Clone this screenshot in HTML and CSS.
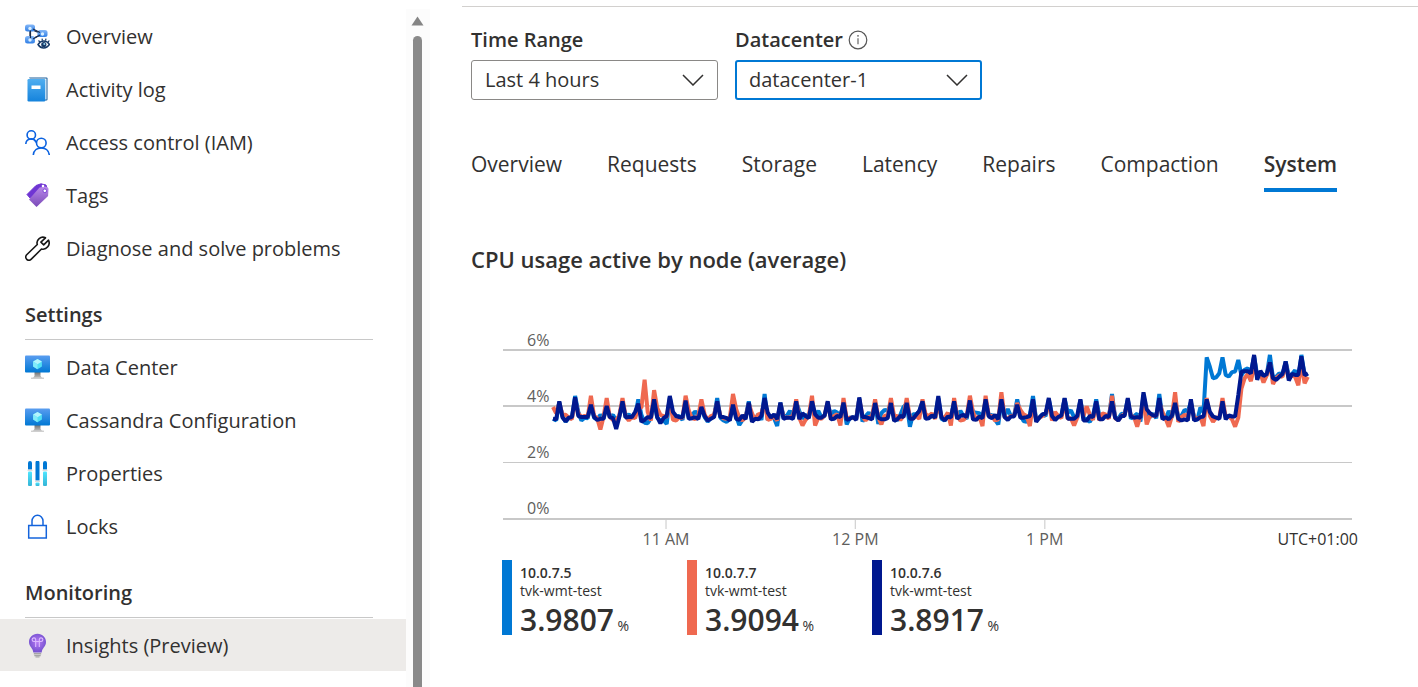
FILE: index.html
```html
<!DOCTYPE html>
<html lang="en">
<head>
<meta charset="utf-8">
<title>Insights (Preview)</title>
<link rel="stylesheet" href="styles.css">
</head>
<body>
<svg class="defs" aria-hidden="true">
  <defs>
    <linearGradient id="g-node" x1="0" y1="0" x2="0" y2="1"><stop offset="0" stop-color="#86b8f7"/><stop offset="1" stop-color="#2f7fe6"/></linearGradient>
    <linearGradient id="g-book" x1="0" y1="0" x2="0" y2="1"><stop offset="0" stop-color="#50aef0"/><stop offset="1" stop-color="#1583dc"/></linearGradient>
    <linearGradient id="g-tag" x1="0" y1="0" x2="0" y2="1"><stop offset="0" stop-color="#b989ea"/><stop offset="1" stop-color="#7a4ab8"/></linearGradient>
    <linearGradient id="g-screen" x1="0" y1="0" x2="0" y2="1"><stop offset="0" stop-color="#5a9df0"/><stop offset="1" stop-color="#0078d4"/></linearGradient>
    <linearGradient id="g-stand" x1="0" y1="0" x2="0" y2="1"><stop offset="0" stop-color="#707070"/><stop offset="1" stop-color="#c8c8c8"/></linearGradient>
    <linearGradient id="g-cyan" x1="0" y1="0" x2="0" y2="1"><stop offset="0" stop-color="#50e6ff"/><stop offset="1" stop-color="#35b4d6"/></linearGradient>
    <radialGradient id="g-bulb" cx=".5" cy=".45" r=".55"><stop offset="0" stop-color="#b77af4"/><stop offset="1" stop-color="#7350cf"/></radialGradient>
    <symbol id="i-monitor" viewBox="0 0 25 25">
      <path d="M9.500 17h6v4l2 2.500h-10l2-2.500z" fill="url(#g-stand)"/>
      <rect x="6" y="22.500" width="13" height="1.500" rx=".5" fill="#cfcfcf"/>
      <rect y="0.500" width="25" height="17" rx="1" fill="url(#g-screen)"/>
      <path d="M12.500 4l4.400 2.600v5L12.500 14.200 8.100 11.600v-5z" fill="#50dff5"/>
      <path d="M12.500 4l4.400 2.600-4.400 2.600-4.400-2.600z" fill="#b4f4fd"/>
      <path d="M8.100 6.600l4.400 2.600v5l-4.400-2.600z" fill="#83ebfa"/>
    </symbol>
  </defs>
</svg>

<div class="page">
  <aside class="sidebar">
    <nav class="menu" aria-label="Resource menu">
      <ul class="menu-list">
        <li><a class="menu-item" href="#overview">
          <svg class="icon" viewBox="0 0 25 25"><path d="M5 5v11l12-6zM5 5l12 5" fill="none" stroke="#1b2d4c" stroke-width="1.300"/><rect x="0" y="0.500" width="10" height="7" rx="2.500" fill="url(#g-node)"/><rect x="0" y="12" width="10" height="7.500" rx="2.500" fill="url(#g-node)"/><rect x="12.500" y="6" width="10" height="7" rx="2.500" fill="url(#g-node)"/><path d="M5.500 6.500v8M8 5l7 3.500M8 15l7-4" fill="none" stroke="#1b2d4c" stroke-width="1.200"/><g fill="#d9efff"><circle cx="5" cy="4.500" r="1.700"/><circle cx="5" cy="16" r="1.700"/><circle cx="17.500" cy="10" r="1.700"/></g><path d="M13 20.500c3-4.700 8.500-4.700 11.500 0-3 4.700-8.500 4.700-11.500 0z" fill="#fff" stroke="#173a68" stroke-width="1.400"/><path d="M13.500 16.500l1.500 1.700M17 14.700l.5 2M21 14.700l-.5 2M24.300 16.500L23 18.200" stroke="#173a68" stroke-width="1.200"/><circle cx="18.800" cy="20.500" r="2.600" fill="#173a68"/><circle cx="19.300" cy="20" r="1" fill="#9bd5ef"/></svg>
          Overview</a></li>
        <li><a class="menu-item" href="#activity">
          <svg class="icon" viewBox="0 0 25 25"><path d="M4 .5h17.500a1 1 0 0 1 1 1v21a1 1 0 0 1-1 1h-2z" fill="#1a5f9c"/><path d="M4 1.500h17.500v21h-2z" fill="#f2f8fc"/><rect x="2.500" y="2" width="17.800" height="22.500" rx="1.200" fill="url(#g-book)"/><rect x="6.500" y="8.500" width="9" height="3.500" fill="#fff"/></svg>
          Activity log</a></li>
        <li><a class="menu-item" href="#iam">
          <svg class="icon" viewBox="0 0 25 25" fill="none" stroke="#0b62e0" stroke-width="1.600"><circle cx="6.300" cy="5" r="4.200"/><path d="M.8 14c.3-6.500 8.700-6.500 10.200-1.500"/><circle cx="16.300" cy="13" r="4.800"/><path d="M8.300 25c.8-9.500 15-9.500 16 0"/></svg>
          Access control (IAM)</a></li>
        <li><a class="menu-item" href="#tags">
          <svg class="icon" viewBox="0 0 25 25"><path d="M11 2.500l5-1.700 5 1.200 1 3L5 15l-3-3.500z" fill="#6f35d3" stroke="#6f35d3" stroke-linejoin="round"/><path d="M14.500 4.500l6.500-1 2.500 2-.4 7.500L11.500 24 4 16.500z" fill="url(#g-tag)"/><circle cx="18" cy="3" r="1.300" fill="#fff"/><circle cx="19.800" cy="7.800" r="1.800" fill="#fff" stroke="#6f35d3" stroke-width=".8"/></svg>
          Tags</a></li>
        <li><a class="menu-item" href="#diagnose">
          <svg class="icon" viewBox="0 0 25 25" fill="none" stroke="#161616" stroke-width="1.600" stroke-linejoin="round"><path d="M20.500 1.800c-4.500-2.300-9.700 2-8.200 6.700L1.700 18.800c-3 3.200 1.600 7.300 4.600 4.400L16.500 13c5 1.200 9.300-4 7-8.800l-4.800 4.600-2.800-2.700z"/></svg>
          Diagnose and solve problems</a></li>
      </ul>

      <h2 class="menu-heading">Settings</h2>
      <ul class="menu-list">
        <li><a class="menu-item" href="#datacenter"><svg class="icon"><use href="#i-monitor"/></svg>Data Center</a></li>
        <li><a class="menu-item" href="#cassandra"><svg class="icon"><use href="#i-monitor"/></svg>Cassandra Configuration</a></li>
        <li><a class="menu-item" href="#properties">
          <svg class="icon" viewBox="0 0 25 25"><g fill="#0078d4"><path d="M3 2a1.500 1.500 0 0 1 4 0v6.500H3zM10.500 1.500a1.500 1.500 0 0 1 4 0v18h-4zM18 2a1.500 1.500 0 0 1 4 0v6.500h-4z"/></g><path d="M2.500 8.800h5v1.200h-5zM10 19.800h5V21h-5zM17.500 8.800h5v1.200h-5z" fill="#ddd"/><g fill="url(#g-cyan)"><rect x="3" y="10.500" width="4" height="14.500" rx="1"/><rect x="10.500" y="21.500" width="4" height="3.500" rx="1"/><rect x="18" y="10.500" width="4" height="14.500" rx="1"/></g></svg>
          Properties</a></li>
        <li><a class="menu-item" href="#locks">
          <svg class="icon" viewBox="0 0 25 25" fill="none" stroke="#1464dc" stroke-width="1.500"><rect x="3.700" y="11.500" width="17.600" height="12.500"/><path d="M7 11.500V7a5.500 5.800 0 0 1 11 0v4.500"/></svg>
          Locks</a></li>
      </ul>

      <h2 class="menu-heading">Monitoring</h2>
      <ul class="menu-list">
        <li><a class="menu-item current" href="#insights" aria-current="page">
          <svg class="icon" viewBox="0 0 25 25"><path d="M12.500.8c5 0 8.500 3.700 8.500 8.200 0 5-4 5.800-4.300 10.500H8.300C8 14.800 4 14 4 9 4 4.500 7.500.8 12.500.8z" fill="url(#g-bulb)"/><path d="M10.700 14V8.500H9a1.800 1.800 0 1 1 1.700-2v2h3.600v-2a1.800 1.800 0 1 1 1.700 2h-1.700V14" fill="none" stroke="#dcb9ff" stroke-width="1.100"/><path d="M8.800 20h7.400v1.500H8.800zM9.300 22h6.400v1.200H9.300zM10.500 23.600h4v1h-4z" fill="#a5a5a5"/></svg>
          Insights (Preview)</a></li>
      </ul>
    </nav>
    <div class="scrollbar" aria-hidden="true">
      <svg class="scroll-arrow" viewBox="0 0 13 10"><path d="M6.500 0.500l6 9h-12z" fill="#858585"/></svg>
      <div class="scroll-thumb"></div>
    </div>
  </aside>

  <main class="content">
    <form class="filters">
      <div class="field">
        <label class="field-label" for="range">Time Range</label>
        <div class="picker">
          <select id="range" class="select"><option>Last 4 hours</option><option>Last 24 hours</option></select>
          <svg class="chevron" viewBox="0 0 22 12"><path d="M1 1l10 10L21 1"/></svg>
        </div>
      </div>
      <div class="field">
        <div class="field-label">
          <label for="dc">Datacenter</label>
          <svg class="info" viewBox="0 0 20 20"><circle cx="10" cy="10" r="8.800" fill="none" stroke="#555" stroke-width="1.200"/><path d="M10 8.300v6" stroke="#666" stroke-width="1.200"/><circle cx="10" cy="5.800" r=".9" fill="#666"/></svg>
        </div>
        <div class="picker">
          <select id="dc" class="select active"><option>datacenter-1</option></select>
          <svg class="chevron" viewBox="0 0 22 12"><path d="M1 1l10 10L21 1"/></svg>
        </div>
      </div>
    </form>

    <div class="tabs" role="tablist">
      <button class="tab" role="tab">Overview</button>
      <button class="tab" role="tab">Requests</button>
      <button class="tab" role="tab">Storage</button>
      <button class="tab" role="tab">Latency</button>
      <button class="tab" role="tab">Repairs</button>
      <button class="tab" role="tab">Compaction</button>
      <button class="tab selected" role="tab" aria-selected="true">System</button>
    </div>

    <section class="panel">
      <h1 class="panel-title">CPU usage active by node (average)</h1>
      <div class="chart">
        <svg class="plot" id="plot" viewBox="0 0 849 169" preserveAspectRatio="none" role="img" aria-label="CPU usage by node">
          <path class="grid-strong" d="M0 0H849M0 56H849M0 169H849"/>
          <path class="grid-light" d="M0 112.500H849"/>
        </svg>
        <div class="y-labels"><span>6%</span><span>4%</span><span>2%</span><span>0%</span></div>
        <div class="x-axis">
          <span class="tick" style="left:19.2%">11 AM</span>
          <span class="tick" style="left:41.5%">12 PM</span>
          <span class="tick" style="left:63.8%">1 PM</span>
          <span class="zone">UTC+01:00</span>
        </div>
      </div>
      <ul class="legend">
        <li class="node azure"><b class="node-ip">10.0.7.5</b><span class="node-name">tvk-wmt-test</span><span class="node-value"><strong>3.9807</strong> %</span></li>
        <li class="node coral"><b class="node-ip">10.0.7.7</b><span class="node-name">tvk-wmt-test</span><span class="node-value"><strong>3.9094</strong> %</span></li>
        <li class="node navy"><b class="node-ip">10.0.7.6</b><span class="node-name">tvk-wmt-test</span><span class="node-value"><strong>3.8917</strong> %</span></li>
      </ul>
    </section>
  </main>
</div>
<script src="chart.js"></script>
</body>
</html>
```

FILE: styles.css
```css
* { box-sizing: border-box; }

body {
  margin: 0;
  background: #fff;
  color: #323130;
  font-family: "Open Sans", "Noto Sans", sans-serif;
  font-size: 20px;
  line-height: 28px;
}

ul { list-style: none; margin: 0; padding: 0; }

.defs { position: absolute; width: 0; height: 0; }

.page {
  display: grid;
  grid-template-columns: 430px 1fr;
  min-height: 100vh;
}

/* Sidebar */
.sidebar { display: grid; grid-template-columns: 1fr 24px; }
.menu { padding-top: 9px; }
.menu-list { display: grid; gap: 1px; margin-top: 1px; }
.menu-item {
  display: flex;
  align-items: center;
  gap: 16px;
  height: 52px;
  padding: 2px 0 0 25px;
  color: inherit;
  text-decoration: none;
  white-space: nowrap;
}
.menu-item.current { background: #edebe9; }
.icon { width: 25px; height: 25px; margin-bottom: 2px; flex: none; }
.menu-heading {
  height: 66px;
  margin: 0 33px 0 25px;
  padding-top: 27px;
  border-bottom: 1px solid #c8c8c8;
  font-size: 20px;
  font-weight: 600;
}
.scrollbar {
  display: flex;
  flex-direction: column;
  align-items: center;
  gap: 10px;
  margin-top: 9px;
  padding: 7px 1px 0 0;
  background: #fcfcfc;
}
.scroll-arrow { width: 13px; height: 10px; }
.scroll-thumb { flex: 1; width: 9px; border-radius: 5px 5px 0 0; background: #8a8a8a; }

/* Content */
.content {
  margin: 6px 0 0 32px;
  padding: 19px 0 0 9px;
  border-top: 1px solid #d2d0ce;
}
.filters { display: flex; gap: 17px; }
.field { width: 247px; }
.field-label {
  display: flex;
  align-items: center;
  gap: 5px;
  margin-bottom: 6px;
  font-weight: 600;
}
.info { width: 20px; height: 20px; }
.picker { display: grid; align-items: center; }
.select {
  grid-area: 1 / 1;
  width: 100%;
  height: 40px;
  padding: 0 40px 0 13px;
  appearance: none;
  border: 1px solid #8a8886;
  border-radius: 3px;
  background: #fff;
  color: inherit;
  font: inherit;
}
.select.active { padding-left: 12px; border: 2px solid #0078d4; }
.chevron {
  grid-area: 1 / 1;
  justify-self: end;
  width: 22px;
  height: 12px;
  margin-right: 14px;
  fill: none;
  stroke: #323130;
  stroke-width: 1.5;
  pointer-events: none;
}
.tabs { display: flex; gap: 45px; margin-top: 46px; }
.tab {
  padding: 4px 0 10px;
  border: 0;
  border-bottom: 4px solid transparent;
  background: none;
  color: inherit;
  font: inherit;
  font-size: 21px;
}
.tab.selected { border-bottom-color: #0078d4; font-weight: 600; }

/* Chart panel */
.panel { margin-top: 53px; padding-right: 66px; }
.panel-title { margin: 0; font-size: 22px; font-weight: 600; line-height: 28px; }
.chart { position: relative; margin: 77px 0 0 32px; }
.plot { display: block; width: 100%; height: 169px; overflow: visible; }
.plot path { vector-effect: non-scaling-stroke; fill: none; }
.grid-strong { stroke: #c8c8c8; stroke-width: 2; }
.grid-light { stroke: #c8c8c8; stroke-width: 1; }
.series { stroke-width: 4; stroke-linejoin: bevel; }
.series.azure { stroke: #0078d4; }
.series.coral { stroke: #ef6950; }
.series.navy { stroke: #00188f; }
.y-labels {
  position: absolute;
  top: -20px;
  left: 24px;
  display: grid;
  grid-auto-rows: 56px;
  color: #605e5c;
  font-size: 16px;
  line-height: 20px;
}
.x-axis {
  position: relative;
  height: 41px;
  color: #605e5c;
  font-size: 16px;
  line-height: 20px;
}
.tick {
  position: absolute;
  display: grid;
  justify-items: center;
  transform: translateX(-50%);
  white-space: nowrap;
}
.tick::before { content: ""; width: 1px; height: 10px; background: #c8c8c8; }
.zone { position: absolute; top: 10px; right: -6px; color: #323130; }

/* Legend */
.legend { display: flex; margin-left: 31px; }
.node {
  display: grid;
  grid-template-rows: 18px 18px 34px;
  width: 185px;
  height: 75px;
  padding: 4px 0 0 8px;
  border-left: 10px solid;
  font-size: 14px;
  line-height: 18px;
}
.node.azure { border-color: #0078d4; }
.node.coral { border-color: #ef6950; }
.node.navy { border-color: #00188f; }
.node-ip { font-weight: 600; }
.node-value { line-height: 40px; }
.node-value strong { font-size: 30px; font-weight: 600; }
```

FILE: chart.js
```js
// One reading per minute, in hundredths of a percent; five readings per cycle.
const series = [
  { name: "azure", readings: `356 350
    415 366 345 360 358 437 380 350 360 358 410 360 354 370 356 405 362 370 348 366
    415 362 372 360 366 425 370 342 340 358 420 360 350 350 338 432 366 362 366 352
    415 360 370 382 370 395 362 346 358 366 430 360 350 345 356 408 366 334 352 362
    418 350 356 372 352 444 352 366 358 330 413 366 366 384 360 415 384 356 370 360
    415 366 384 362 366 412 366 384 378 366 410 336 360 362 356 428 346 366 378 360
    410 338 376 388 384 410 362 350 370 398 408 328 372 372 382 415 362 360 366 362
    430 356 350 362 362 415 360 384 366 356 418 380 378 376 358 420 366 370 352 336
    420 366 390 366 366 425 372 348 345 372 437 352 360 372 366 425 372 352 366 366
    428 378 386 362 358 422 360 352 345 366 425 368 362 366 358 444 362 356 374 372
    425 356 366 374 346 440 370 362 374 358 444 360 356 384 360 420 360 366 388 382
    415 362 350 396 380 574 540 500 503 518 574 512 506 522 524 565 510 530 535 520
    578 510 520 512 510 583 500 505 518 512 560 508 515 528 495 583 510 515` },
  { name: "coral", readings: `398 375
    412 370 370 360 355 420 375 362 366 362 438 366 358 318 362 430 362 352 350 368
    430 366 350 362 358 395 395 495 380 350 458 395 370 366 362 425 352 350 362 358
    438 385 358 355 366 425 372 350 366 370 415 366 358 356 360 444 390 360 350 362
    410 375 352 372 375 415 352 356 366 350 410 362 360 362 366 425 360 332 352 366
    438 332 360 356 368 415 356 366 372 332 430 356 360 360 356 425 366 350 362 366
    425 362 336 368 366 430 366 366 352 366 430 362 356 366 356 425 372 366 375 356
    415 362 360 378 332 430 366 350 352 366 438 380 352 366 330 438 366 366 350 354
    450 362 356 366 366 412 388 372 366 330 412 352 360 366 375 415 350 380 366 358
    415 356 358 332 360 415 366 400 370 352 412 350 375 372 356 438 358 352 366 372
    415 366 362 328 366 420 336 366 368 366 415 380 356 328 366 450 345 362 370 366
    408 362 356 362 330 430 366 345 360 360 430 362 366 354 328 360 463 500 515 490
    540 510 516 485 510 556 480 500 510 505 550 500 510 505 475 555 482 505` },
  { name: "navy", readings: `356 354
    418 361 347 360 362 432 366 362 362 362 406 362 352 356 356 401 362 358 320 362
    418 361 362 362 380 410 345 352 362 360 425 362 340 358 366 437 380 366 362 361
    421 356 358 362 355 398 366 350 356 362 418 362 362 358 350 406 356 352 368 355
    413 345 356 354 366 430 378 360 372 355 413 356 360 360 356 418 355 375 366 358
    418 372 360 360 368 418 354 356 366 362 413 352 356 362 352 432 362 362 358 354
    412 360 354 354 358 412 348 354 366 362 412 356 356 370 384 418 356 358 368 360
    437 362 350 364 360 418 356 366 370 362 421 354 352 364 358 425 364 358 370 354
    425 362 352 364 364 406 360 360 362 366 425 345 360 372 374 430 366 352 362 368
    430 356 356 356 366 425 350 350 366 362 418 354 354 366 362 418 360 350 366 366
    430 364 360 362 360 450 390 376 368 366 430 354 362 354 368 412 356 350 354 350
    425 350 354 362 364 425 380 364 360 356 418 354 368 364 364 440 523 525 525 517
    583 495 526 508 515 556 500 494 505 515 559 492 515 512 512 578 511 518` }
];

const plot = document.getElementById("plot");
const start = 50;
const minute = 3.158;
const baseline = 169;
const percent = 28.15;

for (const { name, readings } of series) {
  const points = readings.trim().split(/\s+/).map((value, i) =>
    `${(start + i * minute).toFixed(1)} ${(baseline - value / 100 * percent).toFixed(1)}`);
  const path = document.createElementNS("http://www.w3.org/2000/svg", "path");
  path.setAttribute("class", `series ${name}`);
  path.setAttribute("d", "M" + points.join("L"));
  plot.append(path);
}
```
